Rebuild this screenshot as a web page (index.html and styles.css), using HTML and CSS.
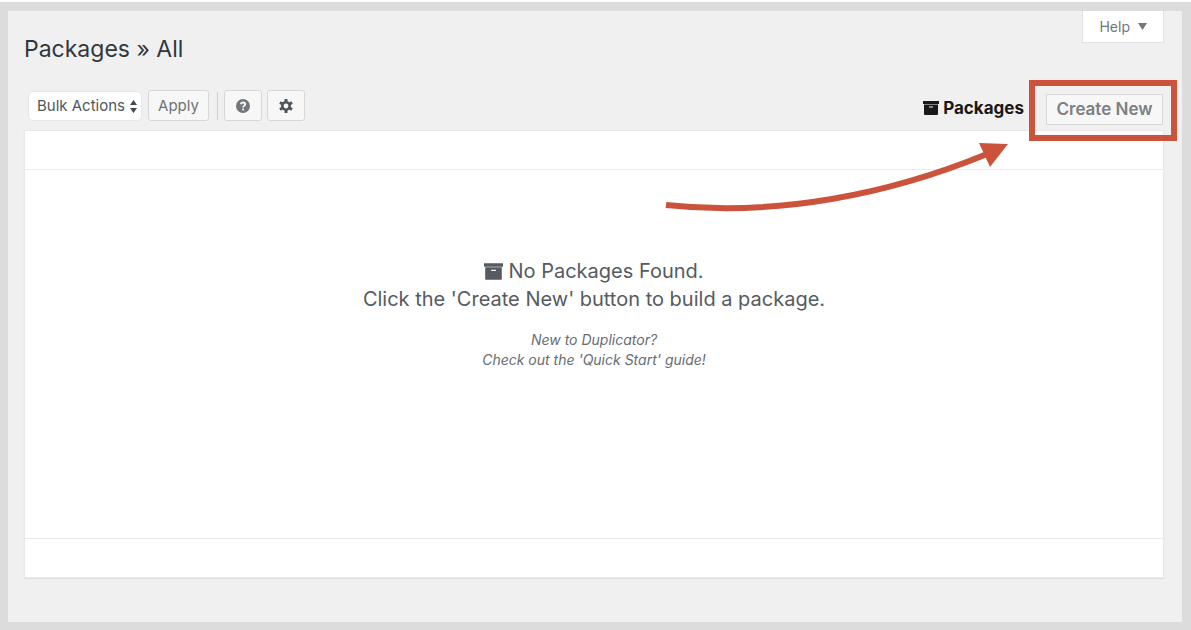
FILE: index.html
```
<!DOCTYPE html>
<html lang="en">
<head>
<meta charset="UTF-8" />
<meta name="viewport" content="width=device-width, initial-scale=1" />
<title>Packages » All</title>
<link rel="stylesheet" href="styles.css">
</head>
<body>
  <!-- Shared icon -->
  <svg width="0" height="0" class="sprite">
    <symbol id="archive" viewBox="0 0 16 14">
      <path fill="currentColor" fill-rule="evenodd" d="M0 0h16v3H0zM1 3.500h14V13a1 1 0 0 1-1 1H2a1 1 0 0 1-1-1zM6 5.500v1h4v-1z" />
    </symbol>
  </svg>

  <div class="frame">
    <div class="top">
      <h1>Packages » All</h1>
      <button type="button" class="help">Help
        <svg width="9" height="7" viewBox="0 0 9 7"><path fill="currentColor" d="M0 0h9L4.500 7z" /></svg>
      </button>
    </div>

    <div class="toolbar">
      <div class="select-box">
        <select aria-label="Bulk actions">
          <option>Bulk Actions</option>
          <option>Delete</option>
        </select>
        <svg width="7" height="13" viewBox="0 0 7 13"><path fill="currentColor" d="M0 5L3.500 0 7 5zM0 8h7L3.500 13z" /></svg>
      </div>
      <button type="button" class="button apply">Apply</button>
      <span class="separator"></span>
      <button type="button" class="button icon help-icon" aria-label="Get help">
        <svg width="14" height="14" viewBox="0 0 14 14">
          <circle cx="7" cy="7" r="7" fill="currentColor" />
          <path fill="none" stroke="#f7f7f7" stroke-width="1.800" d="M4.700 5.300C5 3.800 6 3.500 7 3.500c1.300 0 2.200.7 2.200 1.800C9.200 6.800 7.100 6.700 7.100 8.500" />
          <circle cx="7.100" cy="10.500" r="1.100" fill="#f7f7f7" />
        </svg>
      </button>
      <button type="button" class="button icon" aria-label="Settings">
        <svg width="14" height="14" viewBox="0 0 14 14">
          <g fill="none" stroke="currentColor">
            <circle cx="7" cy="7" r="3.700" stroke-width="2.600" />
            <path stroke-width="3" d="M7 0v3M7 11v3M.940 3.500l2.600 1.500M10.460 9l2.600 1.500M.940 10.500l2.600-1.500M10.460 5l2.600-1.500" />
          </g>
        </svg>
      </button>

      <div class="nav">
        <a href="#" class="current"><svg width="16" height="14"><use href="#archive" /></svg>Packages</a>
        <div class="highlight">
          <button type="button" class="button create">Create New</button>
          <svg class="arrow" width="344" height="70" viewBox="0 0 344 70">
            <path fill="none" stroke="currentColor" stroke-width="6" d="M1 63C112 75 225 52 322 12" />
            <path fill="currentColor" d="M314 1L343 2 325 25z" />
          </svg>
        </div>
      </div>
    </div>

    <table class="packages">
      <thead><tr><th></th></tr></thead>
      <tbody>
        <tr>
          <td>
            <p class="empty"><svg width="19" height="17"><use href="#archive" /></svg>No Packages Found.<br>
              Click the 'Create New' button to build a package.</p>
            <p class="hint">New to Duplicator?<br>
              Check out the 'Quick Start' guide!</p>
          </td>
        </tr>
      </tbody>
      <tfoot><tr><td></td></tr></tfoot>
    </table>
  </div>
</body>
</html>
```
FILE: styles.css
```
* {
    box-sizing: border-box;
}
body {
    margin: 0;
    padding-top: 2px;
    min-height: 100vh;
    display: flex;
    background-color: #ffffff;
    color: #32373c;
    font-family: Inter, "Liberation Sans", sans-serif;
}
.sprite {
    position: absolute;
}
.frame {
    flex: 1;
    background-color: #f0f0f0;
    border: 9px solid #dcdcdc;
    border-left-width: 8px;
    padding: 0 18px 44px 16px;
}
button, select {
    font-family: inherit;
    margin: 0;
    cursor: pointer;
}
.top {
    display: flex;
    justify-content: space-between;
    align-items: flex-start;
}
h1 {
    margin: 0;
    padding-top: 22px;
    font-size: 23px;
    font-weight: 400;
    line-height: 32px;
    color: #32373c;
}
.help {
    display: flex;
    align-items: center;
    gap: 8px;
    height: 32px;
    padding: 0 16px;
    border: 1px solid #e2e2e2;
    border-top: none;
    background-color: #ffffff;
    color: #72777c;
    font-size: 14px;
}
.toolbar {
    display: flex;
    align-items: center;
    height: 65px;
    padding: 16px 0 0 4px;
}
.select-box {
    position: relative;
    color: #444b50;
}
.select-box select {
    appearance: none;
    width: 114px;
    height: 30px;
    padding: 0 8px;
    border: 1px solid #e6e6e6;
    border-radius: 5px;
    background-color: #ffffff;
    color: #50575c;
    font-size: 15px;
}
.select-box svg {
    position: absolute;
    top: 9px;
    right: 5px;
    pointer-events: none;
}
.button {
    height: 31px;
    border: 1px solid #d6d6d6;
    border-radius: 3px;
    background-color: #f7f7f7;
    color: #6c7378;
    font-size: 15px;
}
.apply {
    margin-left: 6px;
    width: 61px;
    padding: 0;
}
.separator {
    width: 1px;
    height: 28px;
    margin: 0 6px 0 8px;
    background-color: #cfcfcf;
}
.icon {
    display: flex;
    align-items: center;
    justify-content: center;
    width: 38px;
    padding: 0;
    margin-right: 5px;
    color: #50575c;
}
.help-icon {
    color: #72777c;
}
.nav {
    display: flex;
    align-items: baseline;
    gap: 5px;
    margin: 9px -13px 0 auto;
}
.current {
    display: flex;
    align-items: center;
    gap: 4px;
    color: #191919;
    font-size: 17px;
    font-weight: 700;
    text-decoration: none;
}
.highlight {
    position: relative;
    padding: 8px 8px 10px 11px;
    border: 6px solid #cb533b;
    color: #cb533b;
}
.create {
    display: block;
    width: 117px;
    padding: 0;
    border-radius: 1px;
    color: #7b8085;
    font-size: 17px;
    font-weight: 600;
}
/* Arrow pointing at the create button */
.arrow {
    position: absolute;
    top: 56px;
    right: 162px;
    pointer-events: none;
}
.packages {
    width: 100%;
    border: 1px solid #e8e8e8;
    border-spacing: 0;
    background-color: #ffffff;
    box-shadow: 0 1px 1px #e0e0e0;
}
.packages th, .packages td {
    padding: 0;
}
.packages thead th {
    height: 39px;
    border-bottom: 1px solid #ebebeb;
}
.packages tbody td {
    height: 368px;
    padding-top: 87px;
    vertical-align: top;
    text-align: center;
}
.packages tfoot td {
    height: 39px;
    border-top: 1px solid #e8e8e8;
}
.empty {
    margin: 0;
    font-size: 20px;
    line-height: 28px;
    color: #555b60;
}
.empty svg {
    margin-right: 5px;
    vertical-align: -2px;
}
.hint {
    margin: 17px 0 0;
    font-size: 14px;
    font-style: italic;
    line-height: 20px;
    color: #666c71;
}
```
